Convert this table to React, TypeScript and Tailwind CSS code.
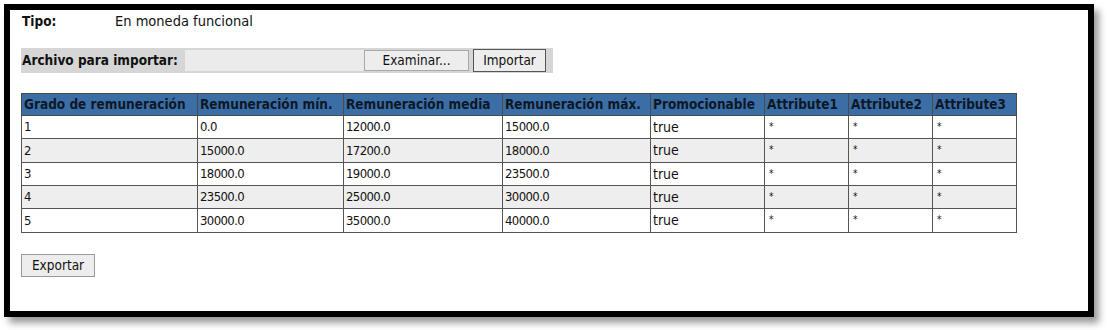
import React from "react";

const font = { fontFamily: "Tahoma, 'DejaVu Sans Condensed', 'DejaVu Sans', sans-serif" };

const headers = [
  "Grado de remuneración",
  "Remuneración mín.",
  "Remuneración media",
  "Remuneración máx.",
  "Promocionable",
  "Attribute1",
  "Attribute2",
  "Attribute3",
];
const widths = [176, 146, 159, 148, 114, 84, 84, 84];
const heights = ["h-[23px]", "h-[24px]", "h-[23px]", "h-[23px]", "h-[24px]"];
const rows = [
  ["1", "0.0", "12000.0", "15000.0", "true", "*", "*", "*"],
  ["2", "15000.0", "17200.0", "18000.0", "true", "*", "*", "*"],
  ["3", "18000.0", "19000.0", "23500.0", "true", "*", "*", "*"],
  ["4", "23500.0", "25000.0", "30000.0", "true", "*", "*", "*"],
  ["5", "30000.0", "35000.0", "40000.0", "true", "*", "*", "*"],
];

function cellClass(c: string) {
  if (c === "*") return "text-[10px] align-top pt-[3px] pl-[4px]";
  if (c === "true") return "text-[14px]";
  return "text-[13px] tracking-[-0.6px]";
}

export default function App() {
  return (
    <div className="w-[1107px] h-[330px] bg-white pt-[4px] pl-[4px]" style={font}>
      <div className="w-[1090px] h-[313px] border-[6px] border-black bg-white shadow-[5px_6px_7px_rgba(0,0,0,0.4)] pl-[11px] pt-[3px] text-[#111]">
        <div className="flex h-[16px] items-center leading-[16px]">
          <span className="w-[94px] pl-[1px] text-[13.5px] font-bold">Tipo:</span>
          <span className="text-[14.5px]">En moneda funcional</span>
        </div>
        <div className="mt-[19px] flex h-[25px] w-[532px] items-center bg-[#d6d6d6]">
          <span className="w-[164px] pl-[1px] text-[13.5px] font-bold whitespace-nowrap">Archivo para importar:</span>
          <div className="h-[21px] w-[179px] bg-[#ebebeb]" />
          <button className="h-[21px] w-[105px] border border-[#a8a8a8] bg-[#ededed] text-[13.5px] leading-none text-[#111]">
            Examinar...
          </button>
          <button className="ml-[4px] h-[23px] w-[73px] border border-[#555] bg-[#ededed] text-[13.5px] leading-none text-[#111]">
            Importar
          </button>
        </div>
        <table className="mt-[20px] table-fixed border-collapse" style={{ width: 996 }}>
          <colgroup>
            {widths.map((w, i) => (
              <col key={i} style={{ width: w }} />
            ))}
          </colgroup>
          <thead>
            <tr className="h-[22px] bg-[#3c6ea6]">
              {headers.map((h) => (
                <th
                  key={h}
                  className="border border-[#4a4a4a] px-[2px] text-left font-bold text-[13.5px] whitespace-nowrap overflow-hidden text-[#0d1726]"
                >
                  {h}
                </th>
              ))}
            </tr>
          </thead>
          <tbody>
            {rows.map((r, i) => (
              <tr key={i} className={`${heights[i]} ${i % 2 === 1 ? "bg-[#eeeeee]" : "bg-white"}`}>
                {r.map((c, j) => (
                  <td
                    key={j}
                    className={`border border-[#555555] px-[2px] text-left text-[#111] ${cellClass(c)}`}
                  >
                    {c}
                  </td>
                ))}
              </tr>
            ))}
          </tbody>
        </table>
        <button className="mt-[21px] h-[23px] w-[74px] border border-[#9a9a9a] bg-[#ededed] text-[13.5px] leading-none text-[#111]">
          Exportar
        </button>
      </div>
    </div>
  );
}
